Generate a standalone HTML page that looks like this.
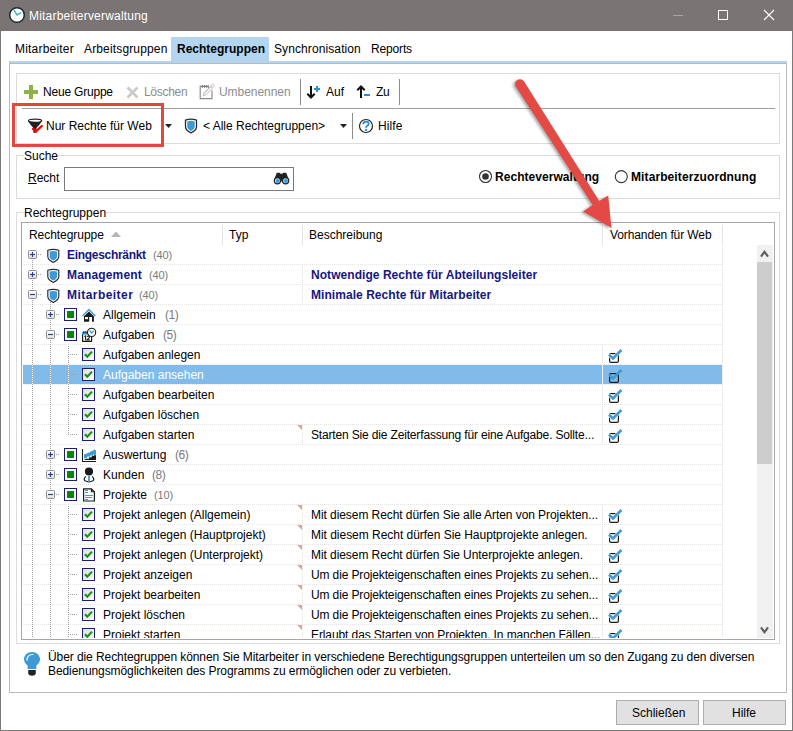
<!DOCTYPE html>
<html><head><meta charset="utf-8"><style>
html,body{margin:0;padding:0}
body{width:793px;height:731px;position:relative;overflow:hidden;background:#fff;font-family:"Liberation Sans",sans-serif;font-size:12px;color:#000}
.t{position:absolute;line-height:14px;white-space:nowrap}
.b{font-weight:bold}
.dis{color:#8d8d8d}
.nv{color:#161682;font-weight:bold}
.cnt{color:#7a7a7a}
svg{display:block;overflow:visible}
.hd{position:absolute;height:1px;background-image:linear-gradient(to right,#e5e5e5 50%,transparent 50%);background-size:2px 1px}
.vd{position:absolute;width:1px;background-image:linear-gradient(to bottom,#dcdcdc 50%,#fff 50%);background-size:1px 2px}
.tv{position:absolute;width:1px;background-image:linear-gradient(to bottom,#a0a0a0 50%,#fff 50%);background-size:1px 2px}
.th{position:absolute;height:1px;background-image:linear-gradient(to right,#a0a0a0 50%,transparent 50%);background-size:2px 1px}
</style></head><body>
<div style="position:absolute;left:0px;top:0px;width:793px;height:31px;background:#7a7574"></div>
<svg style="position:absolute;left:8px;top:6px;" width="18" height="18" viewBox="0 0 18 18"><circle cx="9" cy="9" r="7.3" fill="#fff" stroke="#1e2b33" stroke-width="1.5"/><path d="M9 9 L6.2 4.4 M9 9 L12.7 6.9" stroke="#45b8c0" stroke-width="1.5" fill="none" stroke-linecap="round"/></svg>
<div class="t" style="left:29px;top:9px;color:#fff;letter-spacing:0.2px">Mitarbeiterverwaltung</div>
<div style="position:absolute;left:673px;top:15px;width:10px;height:1px;background:#a9a5a4"></div>
<div style="position:absolute;left:718px;top:10px;width:10px;height:10px;border:1px solid #fff;box-sizing:border-box"></div>
<svg style="position:absolute;left:763px;top:9px;" width="12" height="12" viewBox="0 0 12 12"><path d="M1 1 L11 11 M11 1 L1 11" stroke="#fff" stroke-width="1.1"/></svg>
<div style="position:absolute;left:0px;top:31px;width:1px;height:700px;background:#7d7979"></div>
<div style="position:absolute;left:792px;top:31px;width:1px;height:700px;background:#7d7979"></div>
<div style="position:absolute;left:0px;top:730px;width:793px;height:1px;background:#7d7979"></div>
<div style="position:absolute;left:171px;top:37px;width:98px;height:24px;background:#b3d5f0"></div>
<div class="t" style="left:15px;top:42px;letter-spacing:0.2px">Mitarbeiter</div>
<div class="t" style="left:84px;top:42px;letter-spacing:0.15px">Arbeitsgruppen</div>
<div class="t b" style="left:177px;top:42px;letter-spacing:0px">Rechtegruppen</div>
<div class="t" style="left:274px;top:42px;letter-spacing:0.1px">Synchronisation</div>
<div class="t" style="left:371px;top:42px;letter-spacing:-0.15px">Reports</div>
<div style="position:absolute;left:9px;top:61px;width:778px;height:2px;background:#b3d5f0"></div>
<div style="position:absolute;left:9px;top:63px;width:778px;height:630px;border:1px solid #b9b9b9;box-sizing:border-box"></div>
<div style="position:absolute;left:16px;top:73px;width:764px;height:71px;border:1px solid #dcdcdc;box-sizing:border-box"></div>
<div style="position:absolute;left:22px;top:108px;width:753px;height:1px;background:#a0a0a0"></div>
<svg style="position:absolute;left:24px;top:85px;" width="14" height="14" viewBox="0 0 14 14"><path d="M5 0 H9 V5 H14 V9 H9 V14 H5 V9 H0 V5 H5 Z" fill="#8db24a"/></svg>
<div class="t" style="left:43px;top:85px;letter-spacing:-0.2px">Neue Gruppe</div>
<svg style="position:absolute;left:126px;top:86px;" width="13" height="13" viewBox="0 0 13 13"><path d="M1.5 1.5 L11.5 11.5 M11.5 1.5 L1.5 11.5" stroke="#c9c9c9" stroke-width="2.6"/></svg>
<div class="t dis" style="left:144px;top:85px;letter-spacing:-0.3px">Löschen</div>
<svg style="position:absolute;left:199px;top:83px;" width="16" height="17" viewBox="0 0 16 17"><path d="M13 7.6 V15.6 H1.2 V3.4 H9.6" stroke="#8a8a8a" stroke-width="1.15" fill="none"/><path d="M3.4 2 V4.8 M5.5 2 V4.8 M7.5 2 V4.8 M9.4 2.4 V4.8" stroke="#7c7c7c" stroke-width="1.2"/><path d="M4.2 12.8 L5 10 L11.4 3.6 L13.2 5.4 L6.8 11.8 Z" fill="#fff" stroke="#b9b9b9" stroke-width="1"/><path d="M5.6 10.4 L11.8 4.2" stroke="#d0d0d0" stroke-width="0.8"/><rect x="12.3" y="1.3" width="2.4" height="2.4" transform="rotate(45 13.5 2.5)" fill="#fff" stroke="#b9b9b9" stroke-width="0.9"/></svg>
<div class="t dis" style="left:219px;top:85px;letter-spacing:-0.05px">Umbenennen</div>
<div style="position:absolute;left:300px;top:79px;width:1px;height:26px;background:#8c8c8c"></div>
<svg style="position:absolute;left:305px;top:85px;" width="14" height="14" viewBox="0 0 14 14"><path d="M6 1 V12.5 M2.3 8.8 L6 12.5 L9.7 8.8" stroke="#111" stroke-width="2" fill="none"/><path d="M12 1 V7 M9 4 H15" stroke="#2a8fd6" stroke-width="2"/></svg>
<div class="t" style="left:326px;top:85px;">Auf</div>
<svg style="position:absolute;left:355px;top:85px;" width="16" height="14" viewBox="0 0 16 14"><path d="M6 13 V1.5 M2.3 5.2 L6 1.5 L9.7 5.2" stroke="#111" stroke-width="2" fill="none"/><path d="M9 10 H15" stroke="#2a8fd6" stroke-width="2"/></svg>
<div class="t" style="left:376px;top:85px;letter-spacing:-0.4px">Zu</div>
<div style="position:absolute;left:399px;top:79px;width:1px;height:26px;background:#8c8c8c"></div>
<svg style="position:absolute;left:24px;top:114px;" width="22" height="22" viewBox="0 0 22 22"><path d="M4 6.8 Q5.5 10.2 9.4 14 L9.4 18.8 L12.4 18.8 L12.4 14 Q16.5 10.2 18 6.8 Z" fill="#222"/><ellipse cx="11" cy="6.8" rx="6.6" ry="1.7" fill="#fff" stroke="#222" stroke-width="1.3"/><path d="M9 14.9 L11.9 17.4 L17.8 12" stroke="#f00" stroke-width="2.3" fill="none" stroke-linecap="round"/></svg>
<div class="t" style="left:46px;top:119px;letter-spacing:0px">Nur Rechte für Web</div>
<svg style="position:absolute;left:165px;top:124px;" width="7" height="4" viewBox="0 0 7 4"><path d="M0 0 H7 L3.5 4 Z" fill="#222"/></svg>
<svg style="position:absolute;left:184px;top:118px;" width="14" height="16" viewBox="0 0 14 16"><path d="M1.5 2.2 Q7 0.2 12.5 2.2 L12.5 9 Q12.5 12.2 7 14.8 Q1.5 12.2 1.5 9 Z" fill="#fff" stroke="#2a2a2a" stroke-width="1.3"/><path d="M3.3 3.5 Q7 2.2 10.7 3.5 L10.7 8.8 Q10.7 11.2 7 13 Q3.3 11.2 3.3 8.8 Z" fill="#3d9ad9"/></svg>
<div class="t" style="left:203px;top:119px;letter-spacing:0px">&lt; Alle Rechtegruppen&gt;</div>
<svg style="position:absolute;left:340px;top:124px;" width="7" height="4" viewBox="0 0 7 4"><path d="M0 0 H7 L3.5 4 Z" fill="#222"/></svg>
<div style="position:absolute;left:352px;top:113px;width:1px;height:26px;background:#8c8c8c"></div>
<svg style="position:absolute;left:358px;top:118px;" width="16" height="16" viewBox="0 0 16 16"><circle cx="8" cy="8" r="6.5" fill="#fff" stroke="#222" stroke-width="1.2"/><path d="M5.3 6.3 Q5.4 3.7 8.1 3.7 Q10.7 3.7 10.7 5.8 Q10.7 7.2 9.1 8 Q8 8.6 8 9.8" stroke="#2b8ad2" stroke-width="1.8" fill="none"/><rect x="7" y="10.9" width="2" height="2" fill="#2b8ad2"/></svg>
<div class="t" style="left:378px;top:119px;letter-spacing:0.1px">Hilfe</div>
<div style="position:absolute;left:16px;top:155px;width:764px;height:44px;border:1px solid #dcdcdc;box-sizing:border-box"></div>
<div style="position:absolute;left:24px;top:150px;width:32px;height:12px;background:#fff"></div>
<div class="t" style="left:24px;top:149px;">Suche</div>
<div class="t" style="left:28px;top:171px;"><u>R</u>echt</div>
<div style="position:absolute;left:64px;top:167px;width:230px;height:24px;border:1px solid #7a7a7a;box-sizing:border-box;background:#fff"></div>
<svg style="position:absolute;left:273px;top:172px;" width="17" height="13" viewBox="0 0 17 13"><path d="M3.8 0.8 L6.6 0.8 L7.6 1.8 L9.4 1.8 L10.4 0.8 L13.2 0.8 L15.6 7 L1.4 7 Z" fill="#222"/><path d="M7 6 L10 6 L8.5 10 Z" fill="#222"/><circle cx="4.4" cy="8.7" r="3.7" fill="#222"/><circle cx="12.6" cy="8.7" r="3.7" fill="#222"/><circle cx="4.4" cy="8.7" r="2.5" fill="#bfe0f5"/><circle cx="12.6" cy="8.7" r="2.5" fill="#bfe0f5"/><circle cx="4.7" cy="9" r="2" fill="#3c9be0"/><circle cx="12.9" cy="9" r="2" fill="#3c9be0"/></svg>
<svg style="position:absolute;left:478px;top:169px;" width="15" height="15" viewBox="0 0 15 15"><circle cx="7.5" cy="7.5" r="6" fill="#fff" stroke="#333" stroke-width="1.1"/><circle cx="7.5" cy="7.5" r="3.3" fill="#333"/></svg>
<div class="t b" style="left:495px;top:170px;letter-spacing:0.05px">Rechteverwaltung</div>
<svg style="position:absolute;left:614px;top:169px;" width="15" height="15" viewBox="0 0 15 15"><circle cx="7.3" cy="7.6" r="6" fill="#fff" stroke="#333" stroke-width="1.1"/></svg>
<div class="t b" style="left:631px;top:170px;letter-spacing:0.1px">Mitarbeiterzuordnung</div>
<div style="position:absolute;left:16px;top:212px;width:764px;height:432px;border:1px solid #dcdcdc;box-sizing:border-box"></div>
<div style="position:absolute;left:24px;top:205px;width:81px;height:12px;background:#fff"></div>
<div class="t" style="left:24px;top:206px;">Rechtegruppen</div>
<div style="position:absolute;left:21px;top:222px;width:754px;height:418px;border:1px solid #a3a6ad;box-sizing:border-box"></div>
<div class="t" style="left:29px;top:228px;letter-spacing:-0.05px">Rechtegruppe</div>
<svg style="position:absolute;left:111px;top:231px;" width="10" height="6" viewBox="0 0 10 6"><path d="M0 6 L5 0.5 L10 6 Z" fill="#b5b5b5"/></svg>
<div style="position:absolute;left:222px;top:225px;width:1px;height:20px;background:#e5e5e5"></div>
<div class="t" style="left:229px;top:228px;">Typ</div>
<div style="position:absolute;left:302px;top:225px;width:1px;height:20px;background:#e5e5e5"></div>
<div class="t" style="left:309px;top:228px;">Beschreibung</div>
<div style="position:absolute;left:602px;top:225px;width:1px;height:20px;background:#e5e5e5"></div>
<div class="t" style="left:610px;top:228px;letter-spacing:-0.1px">Vorhanden für Web</div>
<div style="position:absolute;left:722px;top:225px;width:1px;height:20px;background:#e5e5e5"></div>
<div style="position:absolute;left:22px;top:245px;width:735px;height:393px;overflow:hidden">
<div style="position:absolute;left:1px;top:120px;width:699px;height:19px;background:#80bbea"></div>
<div class="hd" style="left:0px;top:19px;width:700px"></div>
<div class="vd" style="left:700px;top:-1px;height:20px"></div>
<div class="hd" style="left:0px;top:39px;width:700px"></div>
<div class="vd" style="left:280px;top:19px;height:20px"></div>
<div class="vd" style="left:700px;top:19px;height:20px"></div>
<div class="hd" style="left:0px;top:59px;width:700px"></div>
<div class="vd" style="left:280px;top:39px;height:20px"></div>
<div class="vd" style="left:700px;top:39px;height:20px"></div>
<div class="hd" style="left:0px;top:79px;width:700px"></div>
<div class="vd" style="left:700px;top:59px;height:20px"></div>
<div class="hd" style="left:0px;top:99px;width:700px"></div>
<div class="vd" style="left:700px;top:79px;height:20px"></div>
<div class="hd" style="left:0px;top:119px;width:700px"></div>
<div class="vd" style="left:580px;top:99px;height:20px"></div>
<div class="vd" style="left:700px;top:99px;height:20px"></div>
<div class="hd" style="left:0px;top:139px;width:700px"></div>
<div class="vd" style="left:580px;top:119px;height:20px"></div>
<div class="vd" style="left:700px;top:119px;height:20px"></div>
<div class="hd" style="left:0px;top:159px;width:700px"></div>
<div class="vd" style="left:580px;top:139px;height:20px"></div>
<div class="vd" style="left:700px;top:139px;height:20px"></div>
<div class="hd" style="left:0px;top:179px;width:700px"></div>
<div class="vd" style="left:580px;top:159px;height:20px"></div>
<div class="vd" style="left:700px;top:159px;height:20px"></div>
<div class="hd" style="left:0px;top:199px;width:700px"></div>
<div class="vd" style="left:280px;top:179px;height:20px"></div>
<div class="vd" style="left:580px;top:179px;height:20px"></div>
<div class="vd" style="left:700px;top:179px;height:20px"></div>
<svg style="position:absolute;left:275px;top:180px;" width="5" height="5" viewBox="0 0 5 5"><path d="M0 0 H5 V5 Z" fill="#d9a3a3"/></svg>
<div class="hd" style="left:0px;top:219px;width:700px"></div>
<div class="vd" style="left:700px;top:199px;height:20px"></div>
<div class="hd" style="left:0px;top:239px;width:700px"></div>
<div class="vd" style="left:700px;top:219px;height:20px"></div>
<div class="hd" style="left:0px;top:259px;width:700px"></div>
<div class="vd" style="left:700px;top:239px;height:20px"></div>
<div class="hd" style="left:0px;top:279px;width:700px"></div>
<div class="vd" style="left:280px;top:259px;height:20px"></div>
<div class="vd" style="left:580px;top:259px;height:20px"></div>
<div class="vd" style="left:700px;top:259px;height:20px"></div>
<svg style="position:absolute;left:275px;top:260px;" width="5" height="5" viewBox="0 0 5 5"><path d="M0 0 H5 V5 Z" fill="#d9a3a3"/></svg>
<div class="hd" style="left:0px;top:299px;width:700px"></div>
<div class="vd" style="left:280px;top:279px;height:20px"></div>
<div class="vd" style="left:580px;top:279px;height:20px"></div>
<div class="vd" style="left:700px;top:279px;height:20px"></div>
<svg style="position:absolute;left:275px;top:280px;" width="5" height="5" viewBox="0 0 5 5"><path d="M0 0 H5 V5 Z" fill="#d9a3a3"/></svg>
<div class="hd" style="left:0px;top:319px;width:700px"></div>
<div class="vd" style="left:280px;top:299px;height:20px"></div>
<div class="vd" style="left:580px;top:299px;height:20px"></div>
<div class="vd" style="left:700px;top:299px;height:20px"></div>
<svg style="position:absolute;left:275px;top:300px;" width="5" height="5" viewBox="0 0 5 5"><path d="M0 0 H5 V5 Z" fill="#d9a3a3"/></svg>
<div class="hd" style="left:0px;top:339px;width:700px"></div>
<div class="vd" style="left:280px;top:319px;height:20px"></div>
<div class="vd" style="left:580px;top:319px;height:20px"></div>
<div class="vd" style="left:700px;top:319px;height:20px"></div>
<svg style="position:absolute;left:275px;top:320px;" width="5" height="5" viewBox="0 0 5 5"><path d="M0 0 H5 V5 Z" fill="#d9a3a3"/></svg>
<div class="hd" style="left:0px;top:359px;width:700px"></div>
<div class="vd" style="left:280px;top:339px;height:20px"></div>
<div class="vd" style="left:580px;top:339px;height:20px"></div>
<div class="vd" style="left:700px;top:339px;height:20px"></div>
<svg style="position:absolute;left:275px;top:340px;" width="5" height="5" viewBox="0 0 5 5"><path d="M0 0 H5 V5 Z" fill="#d9a3a3"/></svg>
<div class="hd" style="left:0px;top:379px;width:700px"></div>
<div class="vd" style="left:280px;top:359px;height:20px"></div>
<div class="vd" style="left:580px;top:359px;height:20px"></div>
<div class="vd" style="left:700px;top:359px;height:20px"></div>
<svg style="position:absolute;left:275px;top:360px;" width="5" height="5" viewBox="0 0 5 5"><path d="M0 0 H5 V5 Z" fill="#d9a3a3"/></svg>
<div class="hd" style="left:0px;top:399px;width:700px"></div>
<div class="vd" style="left:280px;top:379px;height:20px"></div>
<div class="vd" style="left:580px;top:379px;height:20px"></div>
<div class="vd" style="left:700px;top:379px;height:20px"></div>
<svg style="position:absolute;left:275px;top:380px;" width="5" height="5" viewBox="0 0 5 5"><path d="M0 0 H5 V5 Z" fill="#d9a3a3"/></svg>
<div class="tv" style="left:10px;top:15px;height:380px"></div>
<div class="tv" style="left:28px;top:55px;height:340px"></div>
<div class="tv" style="left:46px;top:101px;height:89px"></div>
<div class="tv" style="left:46px;top:261px;height:134px"></div>
<div class="th" style="left:16px;top:9px;width:4px"></div>
<svg style="position:absolute;left:6px;top:5px;" width="9" height="9" viewBox="0 0 9 9"><defs><linearGradient id="eg" x1="0" y1="0" x2="0" y2="1"><stop offset="0" stop-color="#fff"/><stop offset="0.5" stop-color="#f4f4f4"/><stop offset="1" stop-color="#dcdcdc"/></linearGradient></defs><rect x="0.5" y="0.5" width="8" height="8" rx="1" fill="url(#eg)" stroke="#8e8f8f"/><path d="M2 4.5 H7" stroke="#2d3f96" stroke-width="1.2"/><path d="M4.5 2 V7" stroke="#2d3f96" stroke-width="1.2"/></svg>
<svg style="position:absolute;left:25px;top:3px;" width="13" height="15" viewBox="0 0 13 15"><path d="M0.8 2.3 Q6.3 0.3 11.8 2.3 L11.8 8.6 Q11.8 11.9 6.3 14.4 Q0.8 11.9 0.8 8.6 Z" fill="#fff" stroke="#2a2a2a" stroke-width="1.15"/><path d="M2.6 3.6 Q6.3 2.4 10 3.6 L10 8.5 Q10 10.9 6.3 12.6 Q2.6 10.9 2.6 8.5 Z" fill="#3d9ad9"/></svg>
<div class="t nv" style="left:45px;top:3px;letter-spacing:-0.3px">Eingeschränkt</div>
<div class="t cnt" style="left:131px;top:3px;letter-spacing:-0.1px;font-size:11px">(40)</div>
<div class="th" style="left:16px;top:29px;width:4px"></div>
<svg style="position:absolute;left:6px;top:25px;" width="9" height="9" viewBox="0 0 9 9"><defs><linearGradient id="eg" x1="0" y1="0" x2="0" y2="1"><stop offset="0" stop-color="#fff"/><stop offset="0.5" stop-color="#f4f4f4"/><stop offset="1" stop-color="#dcdcdc"/></linearGradient></defs><rect x="0.5" y="0.5" width="8" height="8" rx="1" fill="url(#eg)" stroke="#8e8f8f"/><path d="M2 4.5 H7" stroke="#2d3f96" stroke-width="1.2"/><path d="M4.5 2 V7" stroke="#2d3f96" stroke-width="1.2"/></svg>
<svg style="position:absolute;left:25px;top:23px;" width="13" height="15" viewBox="0 0 13 15"><path d="M0.8 2.3 Q6.3 0.3 11.8 2.3 L11.8 8.6 Q11.8 11.9 6.3 14.4 Q0.8 11.9 0.8 8.6 Z" fill="#fff" stroke="#2a2a2a" stroke-width="1.15"/><path d="M2.6 3.6 Q6.3 2.4 10 3.6 L10 8.5 Q10 10.9 6.3 12.6 Q2.6 10.9 2.6 8.5 Z" fill="#3d9ad9"/></svg>
<div class="t nv" style="left:45px;top:23px;letter-spacing:0.15px">Management</div>
<div class="t cnt" style="left:127px;top:23px;letter-spacing:-0.1px;font-size:11px">(40)</div>
<div class="t nv" style="left:289px;top:23px;letter-spacing:0.05px">Notwendige Rechte für Abteilungsleiter</div>
<div class="th" style="left:16px;top:49px;width:4px"></div>
<svg style="position:absolute;left:6px;top:45px;" width="9" height="9" viewBox="0 0 9 9"><defs><linearGradient id="eg" x1="0" y1="0" x2="0" y2="1"><stop offset="0" stop-color="#fff"/><stop offset="0.5" stop-color="#f4f4f4"/><stop offset="1" stop-color="#dcdcdc"/></linearGradient></defs><rect x="0.5" y="0.5" width="8" height="8" rx="1" fill="url(#eg)" stroke="#8e8f8f"/><path d="M2 4.5 H7" stroke="#2d3f96" stroke-width="1.2"/></svg>
<svg style="position:absolute;left:25px;top:43px;" width="13" height="15" viewBox="0 0 13 15"><path d="M0.8 2.3 Q6.3 0.3 11.8 2.3 L11.8 8.6 Q11.8 11.9 6.3 14.4 Q0.8 11.9 0.8 8.6 Z" fill="#fff" stroke="#2a2a2a" stroke-width="1.15"/><path d="M2.6 3.6 Q6.3 2.4 10 3.6 L10 8.5 Q10 10.9 6.3 12.6 Q2.6 10.9 2.6 8.5 Z" fill="#3d9ad9"/></svg>
<div class="t nv" style="left:45px;top:43px;letter-spacing:0.45px">Mitarbeiter</div>
<div class="t cnt" style="left:117px;top:43px;letter-spacing:-0.1px;font-size:11px">(40)</div>
<div class="t nv" style="left:289px;top:43px;letter-spacing:0.05px">Minimale Rechte für Mitarbeiter</div>
<div class="th" style="left:34px;top:69px;width:4px"></div>
<svg style="position:absolute;left:24px;top:65px;" width="9" height="9" viewBox="0 0 9 9"><defs><linearGradient id="eg" x1="0" y1="0" x2="0" y2="1"><stop offset="0" stop-color="#fff"/><stop offset="0.5" stop-color="#f4f4f4"/><stop offset="1" stop-color="#dcdcdc"/></linearGradient></defs><rect x="0.5" y="0.5" width="8" height="8" rx="1" fill="url(#eg)" stroke="#8e8f8f"/><path d="M2 4.5 H7" stroke="#2d3f96" stroke-width="1.2"/><path d="M4.5 2 V7" stroke="#2d3f96" stroke-width="1.2"/></svg>
<svg style="position:absolute;left:42px;top:63px;" width="13" height="13" viewBox="0 0 13 13"><rect x="0.5" y="0.5" width="12" height="12" fill="#fff" stroke="#1c1f6e"/><rect x="2" y="2" width="9" height="9" fill="#fbfaf6"/><rect x="3" y="3" width="7" height="7" fill="#078707"/></svg>
<svg style="position:absolute;left:60px;top:63px;" width="15" height="15" viewBox="0 0 15 15"><path d="M0.5 8 L6.9 1.6 L13.3 8" stroke="#3b9de0" stroke-width="1.4" fill="none"/><path d="M2 8.3 L6.9 3.5 L11.9 8.3 V13.8 H2 Z" fill="#1a1a1a"/><rect x="3" y="9" width="3" height="2.2" fill="#fff"/><rect x="7.2" y="9" width="2.8" height="5" fill="#fff"/></svg>
<div class="t" style="left:81px;top:63px;letter-spacing:0px">Allgemein</div>
<div class="t cnt" style="left:143px;top:63px;letter-spacing:-0.4px">(1)</div>
<div class="th" style="left:34px;top:89px;width:4px"></div>
<svg style="position:absolute;left:24px;top:85px;" width="9" height="9" viewBox="0 0 9 9"><defs><linearGradient id="eg" x1="0" y1="0" x2="0" y2="1"><stop offset="0" stop-color="#fff"/><stop offset="0.5" stop-color="#f4f4f4"/><stop offset="1" stop-color="#dcdcdc"/></linearGradient></defs><rect x="0.5" y="0.5" width="8" height="8" rx="1" fill="url(#eg)" stroke="#8e8f8f"/><path d="M2 4.5 H7" stroke="#2d3f96" stroke-width="1.2"/></svg>
<svg style="position:absolute;left:42px;top:83px;" width="13" height="13" viewBox="0 0 13 13"><rect x="0.5" y="0.5" width="12" height="12" fill="#fff" stroke="#1c1f6e"/><rect x="2" y="2" width="9" height="9" fill="#fbfaf6"/><rect x="3" y="3" width="7" height="7" fill="#078707"/></svg>
<svg style="position:absolute;left:60px;top:82px;" width="15" height="16" viewBox="0 0 15 16"><path d="M0.6 6 V14.4 H9.6 V10" stroke="#1a1a1a" stroke-width="1.2" fill="#fff"/><rect x="0" y="5" width="5.5" height="2.6" fill="#3b9de0"/><rect x="1.3" y="4" width="1.1" height="2.3" fill="#1a1a1a"/><rect x="3.4" y="4" width="1.1" height="2.3" fill="#1a1a1a"/><path d="M2.4 9.6 L3.6 9 V13.2" stroke="#1a1a1a" stroke-width="1.1" fill="none"/><path d="M5 9.6 Q6.3 8.7 7.3 9.4 Q7.8 10.3 6.8 11.2 L5 13 H8" stroke="#1a1a1a" stroke-width="1.1" fill="none"/><circle cx="9.6" cy="5.4" r="4.1" fill="#fff" stroke="#1a1a1a" stroke-width="1.1"/><path d="M7.6 3.5 L9.6 6 L11.6 4" stroke="#3b9de0" stroke-width="1.3" fill="none"/></svg>
<div class="t" style="left:81px;top:83px;letter-spacing:0px">Aufgaben</div>
<div class="t cnt" style="left:141px;top:83px;letter-spacing:-0.4px">(5)</div>
<div class="th" style="left:48px;top:109px;width:8px"></div>
<svg style="position:absolute;left:60px;top:103px;" width="13" height="13" viewBox="0 0 13 13"><defs><linearGradient id="cg" x1="0" y1="0" x2="1" y2="1"><stop offset="0" stop-color="#dcdcd7"/><stop offset="1" stop-color="#fff"/></linearGradient></defs><rect x="0.5" y="0.5" width="12" height="12" fill="url(#cg)" stroke="#1c1f6e"/><path d="M3 6.3 L5.3 8.8 L10 3.6" stroke="#129512" stroke-width="2.1" fill="none"/></svg>
<div class="t" style="left:81px;top:103px;letter-spacing:0px">Aufgaben anlegen</div>
<svg style="position:absolute;left:586px;top:103px;" width="15" height="15" viewBox="0 0 15 15"><rect x="1.6" y="5.6" width="8.8" height="8.8" rx="1.3" fill="none" stroke="#1a1a1a" stroke-width="1.2"/><path d="M1 6.8 L5 10.4 L13.4 2" stroke="#fff" stroke-width="3.6" fill="none" opacity="1"/><path d="M1 6.8 L5 10.4 L13.4 2" stroke="#3e9ad6" stroke-width="2.6" fill="none"/></svg>
<div class="th" style="left:48px;top:129px;width:8px"></div>
<svg style="position:absolute;left:60px;top:123px;" width="13" height="13" viewBox="0 0 13 13"><defs><linearGradient id="cg" x1="0" y1="0" x2="1" y2="1"><stop offset="0" stop-color="#dcdcd7"/><stop offset="1" stop-color="#fff"/></linearGradient></defs><rect x="0.5" y="0.5" width="12" height="12" fill="url(#cg)" stroke="#1c1f6e"/><path d="M3 6.3 L5.3 8.8 L10 3.6" stroke="#129512" stroke-width="2.1" fill="none"/></svg>
<div class="t" style="left:81px;top:123px;color:#fff;letter-spacing:0px">Aufgaben ansehen</div>
<svg style="position:absolute;left:586px;top:123px;" width="15" height="15" viewBox="0 0 15 15"><rect x="1.6" y="5.6" width="8.8" height="8.8" rx="1.3" fill="none" stroke="#1a1a1a" stroke-width="1.2"/><path d="M1 6.8 L5 10.4 L13.4 2" stroke="#fff" stroke-width="3.6" fill="none" opacity="0"/><path d="M1 6.8 L5 10.4 L13.4 2" stroke="#3e9ad6" stroke-width="2.6" fill="none"/></svg>
<div class="th" style="left:48px;top:149px;width:8px"></div>
<svg style="position:absolute;left:60px;top:143px;" width="13" height="13" viewBox="0 0 13 13"><defs><linearGradient id="cg" x1="0" y1="0" x2="1" y2="1"><stop offset="0" stop-color="#dcdcd7"/><stop offset="1" stop-color="#fff"/></linearGradient></defs><rect x="0.5" y="0.5" width="12" height="12" fill="url(#cg)" stroke="#1c1f6e"/><path d="M3 6.3 L5.3 8.8 L10 3.6" stroke="#129512" stroke-width="2.1" fill="none"/></svg>
<div class="t" style="left:81px;top:143px;letter-spacing:0px">Aufgaben bearbeiten</div>
<svg style="position:absolute;left:586px;top:143px;" width="15" height="15" viewBox="0 0 15 15"><rect x="1.6" y="5.6" width="8.8" height="8.8" rx="1.3" fill="none" stroke="#1a1a1a" stroke-width="1.2"/><path d="M1 6.8 L5 10.4 L13.4 2" stroke="#fff" stroke-width="3.6" fill="none" opacity="1"/><path d="M1 6.8 L5 10.4 L13.4 2" stroke="#3e9ad6" stroke-width="2.6" fill="none"/></svg>
<div class="th" style="left:48px;top:169px;width:8px"></div>
<svg style="position:absolute;left:60px;top:163px;" width="13" height="13" viewBox="0 0 13 13"><defs><linearGradient id="cg" x1="0" y1="0" x2="1" y2="1"><stop offset="0" stop-color="#dcdcd7"/><stop offset="1" stop-color="#fff"/></linearGradient></defs><rect x="0.5" y="0.5" width="12" height="12" fill="url(#cg)" stroke="#1c1f6e"/><path d="M3 6.3 L5.3 8.8 L10 3.6" stroke="#129512" stroke-width="2.1" fill="none"/></svg>
<div class="t" style="left:81px;top:163px;letter-spacing:0px">Aufgaben löschen</div>
<svg style="position:absolute;left:586px;top:163px;" width="15" height="15" viewBox="0 0 15 15"><rect x="1.6" y="5.6" width="8.8" height="8.8" rx="1.3" fill="none" stroke="#1a1a1a" stroke-width="1.2"/><path d="M1 6.8 L5 10.4 L13.4 2" stroke="#fff" stroke-width="3.6" fill="none" opacity="1"/><path d="M1 6.8 L5 10.4 L13.4 2" stroke="#3e9ad6" stroke-width="2.6" fill="none"/></svg>
<div class="th" style="left:48px;top:189px;width:8px"></div>
<svg style="position:absolute;left:60px;top:183px;" width="13" height="13" viewBox="0 0 13 13"><defs><linearGradient id="cg" x1="0" y1="0" x2="1" y2="1"><stop offset="0" stop-color="#dcdcd7"/><stop offset="1" stop-color="#fff"/></linearGradient></defs><rect x="0.5" y="0.5" width="12" height="12" fill="url(#cg)" stroke="#1c1f6e"/><path d="M3 6.3 L5.3 8.8 L10 3.6" stroke="#129512" stroke-width="2.1" fill="none"/></svg>
<div class="t" style="left:81px;top:183px;letter-spacing:0px">Aufgaben starten</div>
<div class="t" style="left:289px;top:183px;letter-spacing:-0.16px">Starten Sie die Zeiterfassung für eine Aufgabe. Sollte...</div>
<svg style="position:absolute;left:586px;top:183px;" width="15" height="15" viewBox="0 0 15 15"><rect x="1.6" y="5.6" width="8.8" height="8.8" rx="1.3" fill="none" stroke="#1a1a1a" stroke-width="1.2"/><path d="M1 6.8 L5 10.4 L13.4 2" stroke="#fff" stroke-width="3.6" fill="none" opacity="1"/><path d="M1 6.8 L5 10.4 L13.4 2" stroke="#3e9ad6" stroke-width="2.6" fill="none"/></svg>
<div class="th" style="left:34px;top:209px;width:4px"></div>
<svg style="position:absolute;left:24px;top:205px;" width="9" height="9" viewBox="0 0 9 9"><defs><linearGradient id="eg" x1="0" y1="0" x2="0" y2="1"><stop offset="0" stop-color="#fff"/><stop offset="0.5" stop-color="#f4f4f4"/><stop offset="1" stop-color="#dcdcdc"/></linearGradient></defs><rect x="0.5" y="0.5" width="8" height="8" rx="1" fill="url(#eg)" stroke="#8e8f8f"/><path d="M2 4.5 H7" stroke="#2d3f96" stroke-width="1.2"/><path d="M4.5 2 V7" stroke="#2d3f96" stroke-width="1.2"/></svg>
<svg style="position:absolute;left:42px;top:203px;" width="13" height="13" viewBox="0 0 13 13"><rect x="0.5" y="0.5" width="12" height="12" fill="#fff" stroke="#1c1f6e"/><rect x="2" y="2" width="9" height="9" fill="#fbfaf6"/><rect x="3" y="3" width="7" height="7" fill="#078707"/></svg>
<svg style="position:absolute;left:58px;top:200px;" width="17" height="17" viewBox="0 0 17 17"><path d="M2.5 4 V16.5 H16" stroke="#1a1a1a" stroke-width="1.1" fill="none"/><path d="M4 9.5 Q5 8.3 6.5 8.8 L7.5 8 Q8.5 7 9.5 7.6 L11 6.2 Q12 5.4 13 5.8 L14.5 4.3 L16 5.5 V9.8 L14.5 10 L13.2 9.6 L12 10.6 L10.8 10.2 L9.3 12 L8 11.2 L6.3 13 L4 13.5 Z" fill="#3e9ad6"/><path d="M4 15 L5.5 14 L7 13.5 L8.3 14.2 L9.8 11.8 L11 12.7 L12.5 10.2 L13.8 11 L15 9.8 L16 10.5 V15 Z" fill="#1a1a1a"/></svg>
<div class="t" style="left:81px;top:203px;letter-spacing:0px">Auswertung</div>
<div class="t cnt" style="left:153px;top:203px;letter-spacing:-0.4px">(6)</div>
<div class="th" style="left:34px;top:229px;width:4px"></div>
<svg style="position:absolute;left:24px;top:225px;" width="9" height="9" viewBox="0 0 9 9"><defs><linearGradient id="eg" x1="0" y1="0" x2="0" y2="1"><stop offset="0" stop-color="#fff"/><stop offset="0.5" stop-color="#f4f4f4"/><stop offset="1" stop-color="#dcdcdc"/></linearGradient></defs><rect x="0.5" y="0.5" width="8" height="8" rx="1" fill="url(#eg)" stroke="#8e8f8f"/><path d="M2 4.5 H7" stroke="#2d3f96" stroke-width="1.2"/><path d="M4.5 2 V7" stroke="#2d3f96" stroke-width="1.2"/></svg>
<svg style="position:absolute;left:42px;top:223px;" width="13" height="13" viewBox="0 0 13 13"><rect x="0.5" y="0.5" width="12" height="12" fill="#fff" stroke="#1c1f6e"/><rect x="2" y="2" width="9" height="9" fill="#fbfaf6"/><rect x="3" y="3" width="7" height="7" fill="#078707"/></svg>
<svg style="position:absolute;left:58px;top:220px;" width="17" height="17" viewBox="0 0 17 17"><circle cx="9" cy="6.5" r="4.1" fill="#1a1a1a"/><path d="M6 11.5 Q3 13.5 5 15.8 Q7 16.8 9 16.8 Q11 16.8 13 15.8 Q15 13.5 12 11.5" stroke="#1a1a1a" stroke-width="1.2" fill="none"/><rect x="8.1" y="11" width="1.8" height="6" fill="#3e9ad6"/></svg>
<div class="t" style="left:81px;top:223px;letter-spacing:0px">Kunden</div>
<div class="t cnt" style="left:130px;top:223px;letter-spacing:-0.4px">(8)</div>
<div class="th" style="left:34px;top:249px;width:4px"></div>
<svg style="position:absolute;left:24px;top:245px;" width="9" height="9" viewBox="0 0 9 9"><defs><linearGradient id="eg" x1="0" y1="0" x2="0" y2="1"><stop offset="0" stop-color="#fff"/><stop offset="0.5" stop-color="#f4f4f4"/><stop offset="1" stop-color="#dcdcdc"/></linearGradient></defs><rect x="0.5" y="0.5" width="8" height="8" rx="1" fill="url(#eg)" stroke="#8e8f8f"/><path d="M2 4.5 H7" stroke="#2d3f96" stroke-width="1.2"/></svg>
<svg style="position:absolute;left:42px;top:243px;" width="13" height="13" viewBox="0 0 13 13"><rect x="0.5" y="0.5" width="12" height="12" fill="#fff" stroke="#1c1f6e"/><rect x="2" y="2" width="9" height="9" fill="#fbfaf6"/><rect x="3" y="3" width="7" height="7" fill="#078707"/></svg>
<svg style="position:absolute;left:58px;top:240px;" width="17" height="17" viewBox="0 0 17 17"><path d="M3.6 3.8 H11.4 L14.4 6.8 V16 H3.6 Z" fill="#fff" stroke="#1a1a1a" stroke-width="1.2"/><path d="M11.4 3.8 V6.8 H14.4" stroke="#1a1a1a" stroke-width="1.1" fill="none"/><g fill="#3b9de0"><rect x="5" y="5" width="3" height="1"/><rect x="5" y="7" width="3" height="1"/><rect x="5" y="10" width="8" height="1"/><rect x="5" y="12" width="7" height="1"/><rect x="5" y="14" width="3" height="1"/></g></svg>
<div class="t" style="left:81px;top:243px;letter-spacing:0px">Projekte</div>
<div class="t cnt" style="left:132px;top:243px;letter-spacing:-0.1px;font-size:11px">(10)</div>
<div class="th" style="left:48px;top:269px;width:8px"></div>
<svg style="position:absolute;left:60px;top:263px;" width="13" height="13" viewBox="0 0 13 13"><defs><linearGradient id="cg" x1="0" y1="0" x2="1" y2="1"><stop offset="0" stop-color="#dcdcd7"/><stop offset="1" stop-color="#fff"/></linearGradient></defs><rect x="0.5" y="0.5" width="12" height="12" fill="url(#cg)" stroke="#1c1f6e"/><path d="M3 6.3 L5.3 8.8 L10 3.6" stroke="#129512" stroke-width="2.1" fill="none"/></svg>
<div class="t" style="left:81px;top:263px;letter-spacing:0px">Projekt anlegen (Allgemein)</div>
<div class="t" style="left:289px;top:263px;letter-spacing:-0.07px">Mit diesem Recht dürfen Sie alle Arten von Projekten...</div>
<svg style="position:absolute;left:586px;top:263px;" width="15" height="15" viewBox="0 0 15 15"><rect x="1.6" y="5.6" width="8.8" height="8.8" rx="1.3" fill="none" stroke="#1a1a1a" stroke-width="1.2"/><path d="M1 6.8 L5 10.4 L13.4 2" stroke="#fff" stroke-width="3.6" fill="none" opacity="1"/><path d="M1 6.8 L5 10.4 L13.4 2" stroke="#3e9ad6" stroke-width="2.6" fill="none"/></svg>
<div class="th" style="left:48px;top:289px;width:8px"></div>
<svg style="position:absolute;left:60px;top:283px;" width="13" height="13" viewBox="0 0 13 13"><defs><linearGradient id="cg" x1="0" y1="0" x2="1" y2="1"><stop offset="0" stop-color="#dcdcd7"/><stop offset="1" stop-color="#fff"/></linearGradient></defs><rect x="0.5" y="0.5" width="12" height="12" fill="url(#cg)" stroke="#1c1f6e"/><path d="M3 6.3 L5.3 8.8 L10 3.6" stroke="#129512" stroke-width="2.1" fill="none"/></svg>
<div class="t" style="left:81px;top:283px;letter-spacing:0px">Projekt anlegen (Hauptprojekt)</div>
<div class="t" style="left:289px;top:283px;letter-spacing:-0.03px">Mit diesem Recht dürfen Sie Hauptprojekte anlegen.</div>
<svg style="position:absolute;left:586px;top:283px;" width="15" height="15" viewBox="0 0 15 15"><rect x="1.6" y="5.6" width="8.8" height="8.8" rx="1.3" fill="none" stroke="#1a1a1a" stroke-width="1.2"/><path d="M1 6.8 L5 10.4 L13.4 2" stroke="#fff" stroke-width="3.6" fill="none" opacity="1"/><path d="M1 6.8 L5 10.4 L13.4 2" stroke="#3e9ad6" stroke-width="2.6" fill="none"/></svg>
<div class="th" style="left:48px;top:309px;width:8px"></div>
<svg style="position:absolute;left:60px;top:303px;" width="13" height="13" viewBox="0 0 13 13"><defs><linearGradient id="cg" x1="0" y1="0" x2="1" y2="1"><stop offset="0" stop-color="#dcdcd7"/><stop offset="1" stop-color="#fff"/></linearGradient></defs><rect x="0.5" y="0.5" width="12" height="12" fill="url(#cg)" stroke="#1c1f6e"/><path d="M3 6.3 L5.3 8.8 L10 3.6" stroke="#129512" stroke-width="2.1" fill="none"/></svg>
<div class="t" style="left:81px;top:303px;letter-spacing:0px">Projekt anlegen (Unterprojekt)</div>
<div class="t" style="left:289px;top:303px;letter-spacing:-0.07px">Mit diesem Recht dürfen Sie Unterprojekte anlegen.</div>
<svg style="position:absolute;left:586px;top:303px;" width="15" height="15" viewBox="0 0 15 15"><rect x="1.6" y="5.6" width="8.8" height="8.8" rx="1.3" fill="none" stroke="#1a1a1a" stroke-width="1.2"/><path d="M1 6.8 L5 10.4 L13.4 2" stroke="#fff" stroke-width="3.6" fill="none" opacity="1"/><path d="M1 6.8 L5 10.4 L13.4 2" stroke="#3e9ad6" stroke-width="2.6" fill="none"/></svg>
<div class="th" style="left:48px;top:329px;width:8px"></div>
<svg style="position:absolute;left:60px;top:323px;" width="13" height="13" viewBox="0 0 13 13"><defs><linearGradient id="cg" x1="0" y1="0" x2="1" y2="1"><stop offset="0" stop-color="#dcdcd7"/><stop offset="1" stop-color="#fff"/></linearGradient></defs><rect x="0.5" y="0.5" width="12" height="12" fill="url(#cg)" stroke="#1c1f6e"/><path d="M3 6.3 L5.3 8.8 L10 3.6" stroke="#129512" stroke-width="2.1" fill="none"/></svg>
<div class="t" style="left:81px;top:323px;letter-spacing:0px">Projekt anzeigen</div>
<div class="t" style="left:289px;top:323px;letter-spacing:-0.13px">Um die Projekteigenschaften eines Projekts zu sehen...</div>
<svg style="position:absolute;left:586px;top:323px;" width="15" height="15" viewBox="0 0 15 15"><rect x="1.6" y="5.6" width="8.8" height="8.8" rx="1.3" fill="none" stroke="#1a1a1a" stroke-width="1.2"/><path d="M1 6.8 L5 10.4 L13.4 2" stroke="#fff" stroke-width="3.6" fill="none" opacity="1"/><path d="M1 6.8 L5 10.4 L13.4 2" stroke="#3e9ad6" stroke-width="2.6" fill="none"/></svg>
<div class="th" style="left:48px;top:349px;width:8px"></div>
<svg style="position:absolute;left:60px;top:343px;" width="13" height="13" viewBox="0 0 13 13"><defs><linearGradient id="cg" x1="0" y1="0" x2="1" y2="1"><stop offset="0" stop-color="#dcdcd7"/><stop offset="1" stop-color="#fff"/></linearGradient></defs><rect x="0.5" y="0.5" width="12" height="12" fill="url(#cg)" stroke="#1c1f6e"/><path d="M3 6.3 L5.3 8.8 L10 3.6" stroke="#129512" stroke-width="2.1" fill="none"/></svg>
<div class="t" style="left:81px;top:343px;letter-spacing:0px">Projekt bearbeiten</div>
<div class="t" style="left:289px;top:343px;letter-spacing:-0.13px">Um die Projekteigenschaften eines Projekts zu sehen...</div>
<svg style="position:absolute;left:586px;top:343px;" width="15" height="15" viewBox="0 0 15 15"><rect x="1.6" y="5.6" width="8.8" height="8.8" rx="1.3" fill="none" stroke="#1a1a1a" stroke-width="1.2"/><path d="M1 6.8 L5 10.4 L13.4 2" stroke="#fff" stroke-width="3.6" fill="none" opacity="1"/><path d="M1 6.8 L5 10.4 L13.4 2" stroke="#3e9ad6" stroke-width="2.6" fill="none"/></svg>
<div class="th" style="left:48px;top:369px;width:8px"></div>
<svg style="position:absolute;left:60px;top:363px;" width="13" height="13" viewBox="0 0 13 13"><defs><linearGradient id="cg" x1="0" y1="0" x2="1" y2="1"><stop offset="0" stop-color="#dcdcd7"/><stop offset="1" stop-color="#fff"/></linearGradient></defs><rect x="0.5" y="0.5" width="12" height="12" fill="url(#cg)" stroke="#1c1f6e"/><path d="M3 6.3 L5.3 8.8 L10 3.6" stroke="#129512" stroke-width="2.1" fill="none"/></svg>
<div class="t" style="left:81px;top:363px;letter-spacing:0px">Projekt löschen</div>
<div class="t" style="left:289px;top:363px;letter-spacing:-0.13px">Um die Projekteigenschaften eines Projekts zu sehen...</div>
<svg style="position:absolute;left:586px;top:363px;" width="15" height="15" viewBox="0 0 15 15"><rect x="1.6" y="5.6" width="8.8" height="8.8" rx="1.3" fill="none" stroke="#1a1a1a" stroke-width="1.2"/><path d="M1 6.8 L5 10.4 L13.4 2" stroke="#fff" stroke-width="3.6" fill="none" opacity="1"/><path d="M1 6.8 L5 10.4 L13.4 2" stroke="#3e9ad6" stroke-width="2.6" fill="none"/></svg>
<div class="th" style="left:48px;top:389px;width:8px"></div>
<svg style="position:absolute;left:60px;top:383px;" width="13" height="13" viewBox="0 0 13 13"><defs><linearGradient id="cg" x1="0" y1="0" x2="1" y2="1"><stop offset="0" stop-color="#dcdcd7"/><stop offset="1" stop-color="#fff"/></linearGradient></defs><rect x="0.5" y="0.5" width="12" height="12" fill="url(#cg)" stroke="#1c1f6e"/><path d="M3 6.3 L5.3 8.8 L10 3.6" stroke="#129512" stroke-width="2.1" fill="none"/></svg>
<div class="t" style="left:81px;top:383px;letter-spacing:0px">Projekt starten</div>
<div class="t" style="left:289px;top:383px;letter-spacing:-0.1px">Erlaubt das Starten von Projekten. In manchen Fällen...</div>
<svg style="position:absolute;left:586px;top:383px;" width="15" height="15" viewBox="0 0 15 15"><rect x="1.6" y="5.6" width="8.8" height="8.8" rx="1.3" fill="none" stroke="#1a1a1a" stroke-width="1.2"/><path d="M1 6.8 L5 10.4 L13.4 2" stroke="#fff" stroke-width="3.6" fill="none" opacity="1"/><path d="M1 6.8 L5 10.4 L13.4 2" stroke="#3e9ad6" stroke-width="2.6" fill="none"/></svg>
</div>
<div style="position:absolute;left:757px;top:245px;width:16px;height:393px;background:#f0f0f0"></div>
<div style="position:absolute;left:757px;top:262px;width:15px;height:202px;background:#cdcdcd"></div>
<svg style="position:absolute;left:760px;top:250px;" width="9" height="8" viewBox="0 0 9 8"><path d="M1 6.6 L4.5 1.8 L8 6.6" stroke="#606060" stroke-width="2.2" fill="none"/></svg>
<svg style="position:absolute;left:760px;top:626px;" width="9" height="8" viewBox="0 0 9 8"><path d="M1 1.4 L4.5 6.2 L8 1.4" stroke="#606060" stroke-width="2.2" fill="none"/></svg>
<svg style="position:absolute;left:22px;top:650px;" width="20" height="28" viewBox="0 0 20 28"><path d="M10 2 C5.5 2 2 5.2 2 9.3 C2 12 3.5 13.8 5.6 15.6 L5.6 19 L14.4 19 L14.4 15.6 C16.5 13.8 18 12 18 9.3 C18 5.2 14.5 2 10 2 Z" fill="#3e9ad6"/><path d="M5 10.5 C4.8 7 6.5 4.3 11.5 4.5" stroke="#fff" stroke-width="1.2" fill="none"/><path d="M6.2 20 H13.8 V23.6 Q13.2 25.8 10 25.8 Q6.8 25.8 6.2 23.6 Z" fill="#222"/></svg>
<div class="t" style="left:48px;top:650px;letter-spacing:-0.08px">Über die Rechtegruppen können Sie Mitarbeiter in verschiedene Berechtigungsgruppen unterteilen um so den Zugang zu den diversen</div>
<div class="t" style="left:48px;top:664px;letter-spacing:-0.08px">Bedienungsmöglichkeiten des Programms zu ermöglichen oder zu verbieten.</div>
<div style="position:absolute;left:616px;top:700px;width:83px;height:25px;background:#e1e1e1;border:1px solid #adadad;box-sizing:border-box"></div>
<div class="t" style="left:632px;top:706px;">Schließen</div>
<div style="position:absolute;left:703px;top:700px;width:83px;height:25px;background:#e1e1e1;border:1px solid #adadad;box-sizing:border-box"></div>
<div class="t" style="left:732px;top:706px;">Hilfe</div>
<div style="position:absolute;left:12px;top:103px;width:152px;height:44px;border:3px solid #e2463f;box-sizing:border-box"></div>
<svg style="position:absolute;left:500px;top:70px;filter:drop-shadow(-1.5px 1.5px 1.5px rgba(0,0,0,0.35))" width="130" height="170" viewBox="0 0 130 170"><path d="M23.8 11.1 L99.3 130.9 L108.2 125.6 L111.5 158 L83.1 141.6 L92.7 135.1 L15.6 16.3 A4.9 4.9 0 0 1 23.8 11.1 Z" fill="#e44a45"/></svg>
</body></html>
